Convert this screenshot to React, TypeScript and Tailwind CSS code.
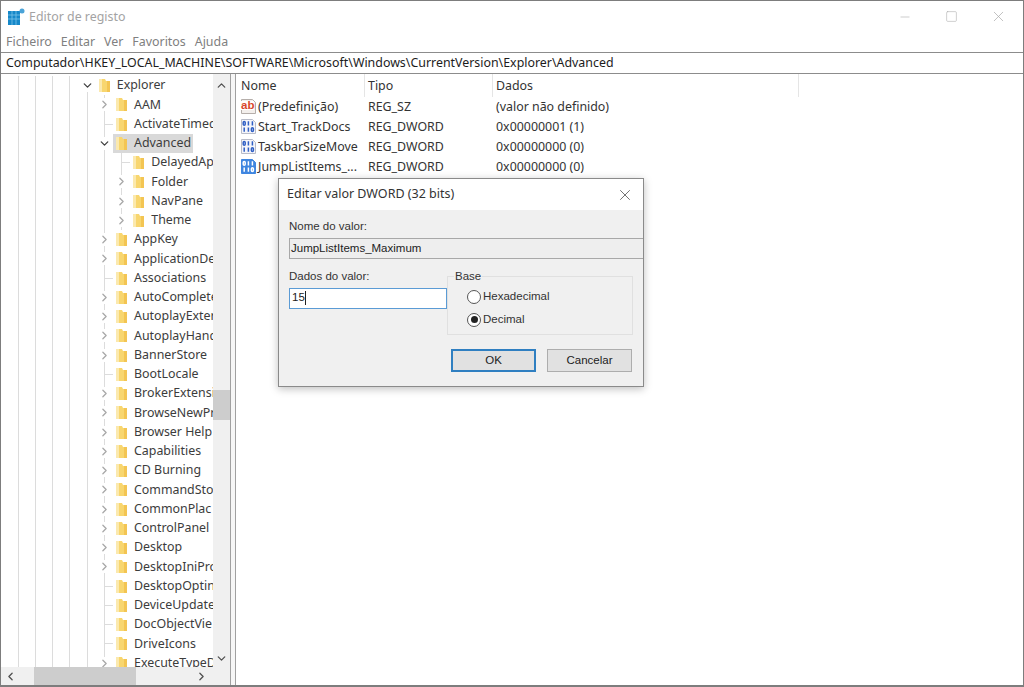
import { ChevronDown, ChevronLeft, ChevronRight, ChevronUp, Minus, Square, X } from "lucide-react";

type Kind = "open" | "closed" | "leaf";

const treeRows: { name: string; depth: number; kind: Kind; selected?: boolean }[] = [
  { name: "Explorer", depth: 0, kind: "open" },
  { name: "AAM", depth: 1, kind: "closed" },
  { name: "ActivateTimed", depth: 1, kind: "leaf" },
  { name: "Advanced", depth: 1, kind: "open", selected: true },
  { name: "DelayedAp", depth: 2, kind: "leaf" },
  { name: "Folder", depth: 2, kind: "closed" },
  { name: "NavPane", depth: 2, kind: "closed" },
  { name: "Theme", depth: 2, kind: "closed" },
  { name: "AppKey", depth: 1, kind: "closed" },
  { name: "ApplicationDe", depth: 1, kind: "closed" },
  { name: "Associations", depth: 1, kind: "leaf" },
  { name: "AutoComplete", depth: 1, kind: "closed" },
  { name: "AutoplayExter", depth: 1, kind: "closed" },
  { name: "AutoplayHand", depth: 1, kind: "closed" },
  { name: "BannerStore", depth: 1, kind: "closed" },
  { name: "BootLocale", depth: 1, kind: "leaf" },
  { name: "BrokerExtensi", depth: 1, kind: "closed" },
  { name: "BrowseNewPr", depth: 1, kind: "closed" },
  { name: "Browser Help", depth: 1, kind: "closed" },
  { name: "Capabilities", depth: 1, kind: "closed" },
  { name: "CD Burning", depth: 1, kind: "closed" },
  { name: "CommandSto", depth: 1, kind: "closed" },
  { name: "CommonPlac", depth: 1, kind: "closed" },
  { name: "ControlPanel", depth: 1, kind: "closed" },
  { name: "Desktop", depth: 1, kind: "closed" },
  { name: "DesktopIniPro", depth: 1, kind: "closed" },
  { name: "DesktopOptin", depth: 1, kind: "leaf" },
  { name: "DeviceUpdate", depth: 1, kind: "leaf" },
  { name: "DocObjectVie", depth: 1, kind: "leaf" },
  { name: "DriveIcons", depth: 1, kind: "leaf" },
  { name: "ExecuteTypeD", depth: 1, kind: "closed" },
];

const values = [
  { name: "(Predefinição)", type: "REG_SZ", data: "(valor não definido)", icon: "text" },
  { name: "Start_TrackDocs", type: "REG_DWORD", data: "0x00000001 (1)", icon: "bin" },
  { name: "TaskbarSizeMove", type: "REG_DWORD", data: "0x00000000 (0)", icon: "bin" },
  { name: "JumpListItems_...", type: "REG_DWORD", data: "0x00000000 (0)", icon: "sel" },
];

function Guide() {
  return (
    <span className="flex w-[17.25px] shrink-0 justify-center">
      <span className="h-full w-px bg-[#dcdcdc]" />
    </span>
  );
}

function FolderIcon() {
  return (
    <svg width="11" height="15" viewBox="0 0 11 15" className="shrink-0">
      <path d="M0 1h6l1 2h4v11H0z" fill="#f8d66f" />
      <path d="M0 1h3v13H0z" fill="#fbe9ae" />
      <path d="M8 3h3v11H8z" fill="#f3c553" />
    </svg>
  );
}

function ValueIcon({ kind }: { kind: string }) {
  if (kind === "text") {
    return (
      <svg width="17" height="17" viewBox="0 0 17 17" className="shrink-0">
        <path d="M1.5 1.5h11l3 3v11h-14z" fill="#f3efec" stroke="#b5aeaa" />
        <rect x="1" y="3" width="13" height="9" fill="#fff" />
        <text x="1" y="11" fontSize="11.5" fontWeight="700" fill="#d9472b" fontFamily="Liberation Sans, sans-serif">ab</text>
      </svg>
    );
  }
  const selected = kind === "sel";
  const ink = selected ? "#ffffff" : "#2f5fc4";
  return (
    <svg width="17" height="17" viewBox="0 0 17 17" className="shrink-0">
      <path d="M1.5 1.5h11l3 3v11h-14z" fill={selected ? "#3f86e0" : "#f4f5fa"} stroke={selected ? "#3f86e0" : "#b9bcc8"} />
      <g fill="none" stroke={ink} strokeWidth="1.5">
        <rect x="3.2" y="3.4" width="2" height="3.8" rx="1" />
        <path d="M8.4 3.2v4.2M12.4 3.2v4.2" />
        <path d="M4.2 9.6v4.2M8.4 9.6v4.2" />
        <rect x="11.4" y="9.8" width="2" height="3.8" rx="1" />
      </g>
    </svg>
  );
}

function TreeRow({ name, depth, kind, selected }: (typeof treeRows)[number]) {
  return (
    <div className="flex h-[19.25px] shrink-0 items-stretch">
      {Array.from({ length: depth + 4 }).map((_, i) => (
        <Guide key={i} />
      ))}
      {kind === "leaf" ? (
        <span className="flex w-[17.25px] shrink-0">
          <span className="w-[9px] border-r border-[#dcdcdc]" />
          <span className="flex flex-1 items-center">
            <span className="h-px w-full bg-[#dcdcdc]" />
          </span>
        </span>
      ) : (
        <span className="flex w-[17.25px] shrink-0 flex-col items-center">
          <span className={depth === 0 ? "w-px flex-1" : "w-px flex-1 bg-[#dcdcdc]"} />
          {kind === "open" ? (
            <ChevronDown size={13} strokeWidth={2.4} className="shrink-0 text-[#404040]" />
          ) : (
            <ChevronRight size={13} strokeWidth={2.4} className="shrink-0 text-[#a8a8a8]" />
          )}
          <span className="w-px flex-1 bg-[#dcdcdc]" />
        </span>
      )}
      <span className="flex min-w-0 flex-1 items-center">
        <span className={`flex h-full items-center gap-[7px] pl-[3px] pr-[2px] ${selected ? "bg-[#d9d9d9]" : ""}`}>
          <FolderIcon />
          <span className="whitespace-nowrap text-[12.4px] text-[#3c3c3c]">{name}</span>
        </span>
      </span>
    </div>
  );
}

function Radio({ label, checked }: { label: string; checked?: boolean }) {
  return (
    <div className="flex items-center gap-[2px] text-[11.5px] text-[#333]">
      <span className="flex h-[14px] w-[14px] items-center justify-center rounded-full border border-[#555] bg-white">
        {checked && <span className="h-[7px] w-[7px] rounded-full bg-[#222]" />}
      </span>
      {label}
    </div>
  );
}

export default function App() {
  return (
    <div className="relative flex h-[687px] w-[1024px] flex-col overflow-hidden border border-b-2 border-[#7d7d7d] bg-white font-['Noto_Sans',sans-serif]">
      <div className="flex h-[31px] shrink-0 items-center pl-[7px]">
        <svg width="17" height="17" viewBox="0 0 17 17" className="shrink-0">
          <path d="M0 3h12v14H0z" fill="#1688c9" />
          <path d="M0 7h12M0 11h12M4 3v14M8 3v14" stroke="#7cc4ea" strokeWidth="0.8" />
          <circle cx="14" cy="3" r="2.5" fill="#4aa3d8" />
        </svg>
        <span className="ml-[4px] pt-[1px] text-[12.4px] text-[#a3a3a3]">Editor de registo</span>
        <div className="ml-auto flex items-center text-[#a8a8a8]">
          <span className="flex w-[46px] justify-center"><Minus size={14} strokeWidth={1} /></span>
          <span className="flex w-[46px] justify-center"><Square size={13} strokeWidth={1} /></span>
          <span className="flex w-[49px] justify-center"><X size={17} strokeWidth={1} /></span>
        </div>
      </div>

      <div className="flex h-[20px] shrink-0 items-center gap-[9px] pl-[5px] pt-[1px] text-[12.4px] text-[#808080]">
        <span>Ficheiro</span>
        <span>Editar</span>
        <span>Ver</span>
        <span>Favoritos</span>
        <span>Ajuda</span>
      </div>

      <div className="flex h-[22px] shrink-0 items-center border-y border-[#8c8c8c] pl-[5px] pt-[1px] text-[12.4px] text-[#1c1c1c]">
        Computador\HKEY_LOCAL_MACHINE\SOFTWARE\Microsoft\Windows\CurrentVersion\Explorer\Advanced
      </div>

      <div className="flex min-h-0 flex-1">
        <div className="flex w-[230px] shrink-0 flex-col border-r border-[#a0a0a0]">
          <div className="flex min-h-0 flex-1">
            <div className="flex min-w-0 flex-1 flex-col overflow-hidden pl-[8.5px] pt-[2px]">
              {treeRows.map((row) => (
                <TreeRow key={row.name} {...row} />
              ))}
            </div>
            <div className="flex w-[17px] shrink-0 flex-col items-center bg-[#f0f0f0] pt-[5px]">
              <ChevronUp size={13} strokeWidth={2.4} className="shrink-0 text-[#505050]" />
              <div className="mt-[298px] h-[30px] w-full shrink-0 bg-[#cdcdcd]" />
              <ChevronDown size={13} strokeWidth={2.4} className="mt-auto mb-[2px] shrink-0 text-[#505050]" />
            </div>
          </div>
          <div className="flex h-[18px] shrink-0 items-center bg-[#f0f0f0] pl-[3px]">
            <ChevronLeft size={13} strokeWidth={2.4} className="shrink-0 text-[#505050]" />
            <div className="ml-[17px] h-full w-[102px] shrink-0 bg-[#cdcdcd]" />
            <ChevronRight size={13} strokeWidth={2.4} className="ml-[59px] shrink-0 text-[#505050]" />
          </div>
        </div>

        <div className="w-[4px] shrink-0 bg-[#f6f6f6]" />

        <div className="flex min-w-0 flex-1 flex-col border-l border-[#a0a0a0] text-[12.4px] text-[#333]">
          <div className="flex h-[23px] shrink-0 items-center">
            <div className="flex h-full w-[129px] items-center border-r border-[#e5e5e5] pl-[5px] pt-[2px]">Nome</div>
            <div className="flex h-full w-[128px] items-center border-r border-[#e5e5e5] pl-[3px] pt-[2px]">Tipo</div>
            <div className="flex h-full w-[306px] items-center border-r border-[#e5e5e5] pl-[3px] pt-[2px]">Dados</div>
          </div>
          {values.map((v) => (
            <div key={v.name} className="flex h-[20px] shrink-0 items-center">
              <div className="flex w-[129px] items-center gap-[1px] whitespace-nowrap pl-[4px]">
                <ValueIcon kind={v.icon} />
                {v.name}
              </div>
              <div className="w-[128px] pl-[3px]">{v.type}</div>
              <div className="pl-[3px]">{v.data}</div>
            </div>
          ))}
        </div>
      </div>

      <div className="absolute left-[277px] top-[177px] flex h-[209px] w-[366px] flex-col overflow-hidden border border-[#8a8a8a] bg-[#f0f0f0] font-['Liberation_Sans',sans-serif] shadow-[0_2px_8px_rgba(0,0,0,0.25)]">
        <div className="flex h-[31px] shrink-0 items-center justify-between bg-white pl-[8px] pr-[9px] font-['Noto_Sans',sans-serif] text-[12.5px] text-[#333]">
          Editar valor DWORD (32 bits)
          <X size={18} strokeWidth={1} className="text-[#444]" />
        </div>
        <div className="flex flex-1 flex-col pl-[10px] pt-[9px]">
          <div className="text-[11.5px] leading-[14px] text-[#333]">Nome do valor:</div>
          <div className="-mr-[2px] mt-[5px] flex h-[21px] items-center border border-[#a8a8a8] bg-[#eeeeee] pl-[1px] text-[11.5px] text-[#222]">
            JumpListItems_Maximum
          </div>
          <div className="mt-[10px] flex">
            <div className="w-[158px] shrink-0">
              <div className="text-[11.5px] leading-[14px] text-[#333]">Dados do valor:</div>
              <div className="mt-[5px] flex h-[21px] items-center border border-[#5b9bd5] bg-white pb-[1px] pl-[2px] text-[11.5px] text-[#222]">
                15<span className="h-[14px] w-px bg-[#222]" />
              </div>
            </div>
            <fieldset className="h-[66px] w-[186px] border border-[#e0e0e0] pl-[19px]">
              <legend className="-ml-[13px] px-[1px] text-[11.5px] leading-[14px] text-[#333]">Base</legend>
              <div className="mt-[5px] flex flex-col gap-[6px]">
                <Radio label="Hexadecimal" />
                <Radio label="Decimal" checked />
              </div>
            </fieldset>
          </div>
          <div className="mt-[14px] flex gap-[11px] pl-[162px] text-[11.5px] text-[#222]">
            <button className="h-[23px] w-[85px] border-2 border-[#2f7fc1] bg-[#e1e1e1]">OK</button>
            <button className="h-[23px] w-[85px] border border-[#adadad] bg-[#e1e1e1]">Cancelar</button>
          </div>
        </div>
      </div>
    </div>
  );
}
